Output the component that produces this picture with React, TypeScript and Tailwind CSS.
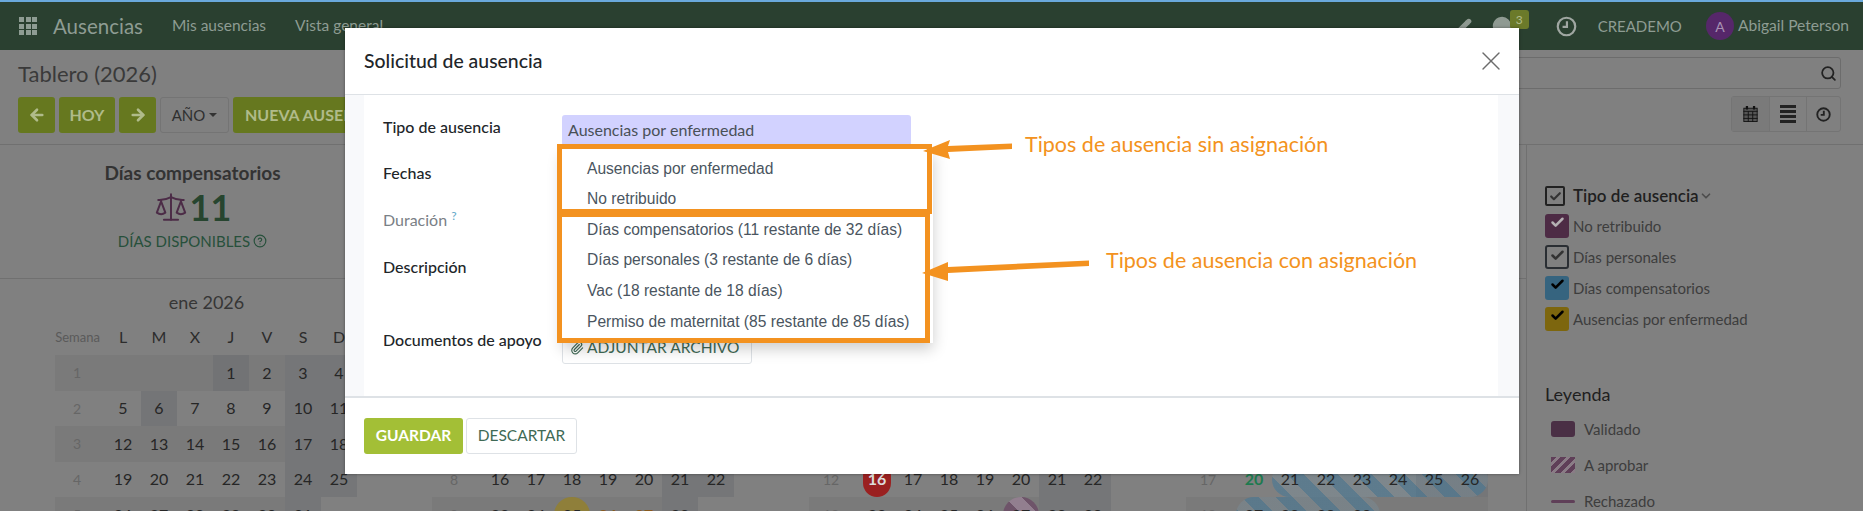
import React from 'react';
import { ArrowLeft, ArrowRight, Check, ChevronDown, CircleHelp, Paperclip, Pencil, Scale, Search, MessageCircle, X } from 'lucide-react';

const dayNames = ['L', 'M', 'X', 'J', 'V', 'S', 'D'];

// ISO week rows of a 2026 month
const buildWeeks = (month: number) => {
    const first = new Date(Date.UTC(2026, month, 1));
    const lastDay = new Date(Date.UTC(2026, month + 1, 0)).getUTCDate();
    const offset = (first.getUTCDay() + 6) % 7;
    const dayOfYear = (first.getTime() - Date.UTC(2026, 0, 1)) / 86400000;
    const firstWeek = Math.floor((dayOfYear + 3) / 7) + 1;
    const cells: (number | null)[] = [...Array(offset).fill(null), ...Array.from({ length: lastDay }, (_, i) => i + 1)];
    while (cells.length % 7) cells.push(null);
    const rows: { week: number; days: (number | null)[] }[] = [];
    for (let i = 0; i < cells.length; i += 7) {
        rows.push({ week: firstWeek + i / 7, days: cells.slice(i, i + 7) });
    }
    return rows;
};

const months = [
    { label: 'ene 2026', month: 0 },
    { label: 'feb 2026', month: 1 },
    { label: 'mar 2026', month: 2 },
    { label: 'abr 2026', month: 3 },
];

const dayClass = (month: number, day: number) => {
    if (month === 0 && day === 1) return 'bg-[#727375]';
    if (month === 0 && day === 6) return 'bg-[#747577]';
    if (month === 1 && day === 25) return 'bg-[#8f7f3a] rounded-full';
    if (month === 1 && (day === 26 || day === 27)) return 'text-[#8a5a1e]! font-bold';
    if (month === 2 && day === 16) return 'bg-[#9a2020] rounded-full mx-[4px] text-[#dcdcdc]! font-bold';
    if (month === 2 && day === 27) return 'rounded-full bg-fixed bg-[repeating-linear-gradient(45deg,#927f8f_0px,#927f8f_12px,#6e5469_12px,#6e5469_24px)]';
    if (month === 3 && day === 20) return 'text-[#1d7a4f]! font-bold';
    if (month === 3 && day >= 21) {
        const rounded = day === 21 || day === 27 ? 'rounded-l-[18px]' : day === 26 || day === 30 ? 'rounded-r-[18px]' : '';
        return `bg-fixed bg-[repeating-linear-gradient(45deg,rgba(70,120,150,0.6)_0px,rgba(70,120,150,0.6)_12px,rgba(120,155,175,0.25)_12px,rgba(120,155,175,0.25)_24px)] ${rounded}`;
    }
    return '';
};

const cellBg = (days: (number | null)[], d: number, shaded: boolean) => {
    // a Sunday left empty after a full Saturday stays unshaded
    if (d === 6 && !days[6] && days[5]) return '';
    if (d >= 5 && days[d]) return 'bg-[#757678]';
    return shaded ? 'bg-[#7a7a7a]' : '';
};

const MonthGrid: React.FC<{ label: string; month: number }> = ({ label, month }) => (
    <div className="w-[303px]">
        <div className="h-[46px] flex items-center justify-center text-[18px] text-[#363636]">{label}</div>
        <div className="flex h-[30px] items-start pt-[2px]">
            <div className="w-[50px] pr-[5px] text-[13px] leading-[20px] text-[#5a5a5a] text-center">Semana</div>
            {dayNames.map((d) => (
                <div key={d} className="w-[36px] text-center text-[16px] leading-[20px] text-[#2c2c2c]">{d}</div>
            ))}
        </div>
        {buildWeeks(month).map((row, i) => (
            <div key={row.week} className="flex h-[35.5px] items-center">
                <div className={`w-[50px] h-full pr-[6px] flex items-center justify-center text-[14px] text-[#666666] ${i % 2 === 0 ? 'bg-[#7a7a7a]' : ''}`}>{row.week}</div>
                {row.days.map((day, d) => (
                    <div key={d} className={`w-[36px] h-full ${cellBg(row.days, d, i % 2 === 0)}`}>
                        <div className={`h-full flex items-center justify-center text-[16px] text-[#262626] ${day ? dayClass(month, day) : ''}`}>{day}</div>
                    </div>
                ))}
            </div>
        ))}
    </div>
);

const ClockIcon: React.FC<{ size: number; color: string; width: number }> = ({ size, color, width }) => (
    <svg width={size} height={size} viewBox="0 0 24 24" fill="none" stroke={color} strokeWidth={width}>
        <circle cx="12" cy="12" r="10" />
        <path d="M12.5 6v6.5H7.5" />
    </svg>
);

const NavLink: React.FC<{ children: React.ReactNode }> = ({ children }) => (
    <span className="text-[15.5px] text-[#8e9c93]">{children}</span>
);

const GreenButton: React.FC<{ className: string; children: React.ReactNode }> = ({ className, children }) => (
    <div className={`h-[36px] flex items-center justify-center rounded-[3px] bg-[#66781f] text-[#b0bb8a] font-bold text-[16px] ${className}`}>{children}</div>
);

const TypeRow: React.FC<{ box: string; check: string; label: string }> = ({ box, check, label }) => (
    <div className="flex items-center h-[24px] mb-[7px]">
        <div className={`w-[24px] h-[24px] rounded-[3px] flex items-start justify-center pt-[1px] ${box}`}>
            <Check size={15} strokeWidth={4} className={check} />
        </div>
        <span className="ml-[4px] text-[15px] text-[#3d3d3d]">{label}</span>
    </div>
);

const FormLabel: React.FC<{ className: string; children: React.ReactNode }> = ({ className, children }) => (
    <div className={`absolute left-[19px] text-[16px] font-medium leading-[20px] ${className}`}>{children}</div>
);

const items = ['Ausencias por enfermedad', 'No retribuido', 'Días compensatorios (11 restante de 32 días)', 'Días personales (3 restante de 6 días)', 'Vac (18 restante de 18 días)', 'Permiso de maternitat (85 restante de 85 días)'];

export default function App() {
    return (
        <div className="relative w-[1863px] h-[511px] overflow-hidden bg-[#808080] font-['Lato','Noto_Sans',sans-serif]">
            <div className="h-[2px] bg-[#6aa9dc]" />
            {/* Navbar */}
            <div className="h-[48px] bg-[#2a4030] flex items-center">
                <div className="ml-[19px] grid grid-cols-3 gap-[1.5px] w-[18px]">
                    {Array.from({ length: 9 }).map((_, i) => (
                        <div key={i} className="h-[5px] bg-[#8e9c93]" />
                    ))}
                </div>
                <span className="ml-[16px] text-[20.5px] text-[#8e9c93]">Ausencias</span>
                <div className="ml-[29px] flex gap-[29px]">
                    <NavLink>Mis ausencias</NavLink>
                    <NavLink>Vista general</NavLink>
                </div>
                <div className="ml-auto flex items-center pr-[14px]">
                    <Pencil size={16} className="text-[#8f9a92] fill-[#8f9a92] mr-[20px]" />
                    <div className="relative mr-[44px]">
                        <MessageCircle size={20} className="text-[#8f9a92] fill-[#8f9a92]" />
                        <div className="absolute -top-[6px] left-[18px] w-[19px] h-[19px] rounded-[3px] bg-[#6b7a2a] text-[#b0bb8a] text-[12px] flex items-center justify-center">3</div>
                    </div>
                    <div className="mr-[21px]"><ClockIcon size={21} color="#a0a7a2" width={2.5} /></div>
                    <span className="text-[15px] text-[#8e9c93]">CREADEMO</span>
                    <div className="ml-[24px] w-[28px] h-[28px] rounded-full bg-[#56276a] text-[#a892b3] text-[14px] flex items-center justify-center">A</div>
                    <span className="ml-[4px] text-[15.6px] text-[#8e9c93]">Abigail Peterson</span>
                </div>
            </div>
            {/* Control panel */}
            <div className="h-[95px] border-b border-[#707070] px-[18px] pr-[22px] flex justify-between">
                <div>
                    <div className="h-[47px] flex items-center text-[22px] text-[#3a3a3a]">Tablero (2026)</div>
                    <div className="flex gap-[4px]">
                        <GreenButton className="w-[37px]"><ArrowLeft size={18} strokeWidth={3.5} /></GreenButton>
                        <GreenButton className="w-[56px]">HOY</GreenButton>
                        <GreenButton className="w-[37px]"><ArrowRight size={18} strokeWidth={3.5} /></GreenButton>
                        <div className="w-[69px] h-[36px] flex items-center justify-center gap-[4px] border border-[#747474] rounded-[3px] text-[15px] text-[#2f2f2f]">
                            AÑO
                            <span className="border-x-[4px] border-x-transparent border-t-[4px] border-t-[#333]" />
                        </div>
                        <GreenButton className="w-[160px] justify-start pl-[12px] whitespace-nowrap">NUEVA AUSENCIA</GreenButton>
                    </div>
                </div>
                <div className="flex flex-col items-end pt-[7px]">
                    <div className="w-[500px] h-[32px] border border-[#6c6c6c] rounded-[3px] flex items-center justify-end pr-[3px]">
                        <Search size={17} strokeWidth={2.5} className="text-[#222]" />
                    </div>
                    <div className="mt-[7px] flex h-[36px] w-[110px] border border-[#747474] rounded-[3px]">
                        <div className="w-[37px] flex items-center justify-center bg-[#7a7a7a]">
                            <svg width="15" height="16" viewBox="0 0 16 18" fill="none" stroke="#111" strokeWidth="1">
                                <rect x="0.5" y="2.5" width="15" height="15" fill="#555" />
                                <path d="M0 6h16M5.5 6v12M10.5 6v12M0 10h16M0 14h16" />
                                <path d="M4 0v4M12 0v4" strokeWidth="2.5" />
                            </svg>
                        </div>
                        <div className="w-[38px] flex flex-col items-center justify-center gap-[2px] border-x border-[#747474]">
                            {[0, 1, 2, 3].map((i) => <div key={i} className="w-[16px] h-[3px] bg-[#222]" />)}
                        </div>
                        <div className="flex-1 flex items-center justify-center">
                            <ClockIcon size={15} color="#222" width={3} />
                        </div>
                    </div>
                </div>
            </div>
            <div className="flex">
                {/* Main */}
                <div className="w-[1526px]">
                    <div className="h-[134px] border-b border-[#707070] flex">
                        <div className="w-[385px] pt-[17px] flex flex-col items-center">
                            <div className="text-[19px] font-bold leading-[22px] text-[#333]">Días compensatorios</div>
                            <div className="flex items-center h-[44px] mt-[1px]">
                                <Scale size={34} strokeWidth={1.4} className="text-[#4c2c47]" />
                                <span className="ml-[2px] text-[36px] font-bold text-[#27452f]">11</span>
                            </div>
                            <div className="mt-[1px] flex items-center gap-[3px] text-[15px] text-[#27503b]">
                                DÍAS DISPONIBLES <CircleHelp size={14} />
                            </div>
                        </div>
                    </div>
                    <div className="pl-[55px] flex gap-[74px]">
                        {months.map((m) => <MonthGrid key={m.month} label={m.label} month={m.month} />)}
                    </div>
                </div>
                {/* Sidebar */}
                <div className="flex-1 border-l border-[#707070] pl-[18px] pt-[39px]">
                    <div className="flex items-center h-[24px] mb-[6px]">
                        <div className="w-[20px] h-[20px] border-2 border-[#222] rounded-[2px] flex items-center justify-center">
                            <Check size={13} strokeWidth={4} className="text-[#333]" />
                        </div>
                        <span className="ml-[8px] text-[17px] font-semibold text-[#1f1f1f]">Tipo de ausencia</span>
                        <ChevronDown size={14} strokeWidth={3} className="text-[#4d4d4d]" />
                    </div>
                    <TypeRow box="bg-[#4d2b45]" check="text-[#b5b0b3]" label="No retribuido" />
                    <TypeRow box="border-2 border-[#2a2e33]" check="text-[#333]" label="Días personales" />
                    <TypeRow box="bg-[#36647f]" check="text-black" label="Días compensatorios" />
                    <TypeRow box="bg-[#7d660e]" check="text-black" label="Ausencias por enfermedad" />
                    <div className="mt-[51px] text-[18px] leading-[24px] text-[#1f1f1f]">Leyenda</div>
                    <div className="mt-[13px] flex items-center h-[20px]">
                        <div className="ml-[6px] w-[24px] h-[16px] rounded-[3px] bg-[#4a2f45]" />
                        <span className="ml-[9px] text-[15px] text-[#3d3d3d]">Validado</span>
                    </div>
                    <div className="mt-[16px] flex items-center h-[20px]">
                        <div className="ml-[6px] w-[24px] h-[16px] bg-[repeating-linear-gradient(135deg,#5f3f58_0px,#5f3f58_4px,#8a7c86_4px,#8a7c86_7px)]" />
                        <span className="ml-[9px] text-[15px] text-[#3d3d3d]">A aprobar</span>
                    </div>
                    <div className="mt-[16px] flex items-center h-[20px]">
                        <div className="ml-[6px] w-[24px] h-[3px] rounded-full bg-[#5f3f58]" />
                        <span className="ml-[9px] text-[15px] text-[#3d3d3d]">Rechazado</span>
                    </div>
                </div>
            </div>

            {/* Modal */}
            <div className="absolute left-[345px] top-[28px] w-[1174px] h-[446px] bg-white shadow-[0_0_3px_rgba(0,0,0,0.4)] flex flex-col">
                <div className="h-[67px] shrink-0 border-b border-[#dee2e6] flex items-center justify-between pl-[19px] pr-[12px]">
                    <span className="text-[19.4px] font-medium text-[#212529]">Solicitud de ausencia</span>
                    <X size={32} strokeWidth={1} className="text-[#6c6c6c]" />
                </div>
                <div className="h-[303px] shrink-0 bg-[#f8f9fb] px-[19px] pr-[21px] border-b-2 border-[#dee2e6]">
                    <div className="relative h-full bg-white">
                        <FormLabel className="top-[22px] text-[#212529]">Tipo de ausencia</FormLabel>
                        <FormLabel className="top-[68px] text-[#212529]">Fechas</FormLabel>
                        <FormLabel className="top-[115px] text-[#7a8086] font-normal">Duración <sup className="text-[#5fa8c8]">?</sup></FormLabel>
                        <FormLabel className="top-[162px] text-[#212529]">Descripción</FormLabel>
                        <FormLabel className="top-[235px] text-[#212529]">Documentos de apoyo</FormLabel>

                        <div className="absolute left-[198px] top-[20px] w-[349px] h-[30px] bg-[#d2d2ff] rounded-[3px] border-b border-[#c3c3ee] pl-[6px] flex items-center text-[16px] text-[#495057]">Ausencias por enfermedad</div>
                        <div className="absolute left-[198px] top-[238px] w-[190px] h-[31px] border border-[#dee2e6] rounded-[3px] flex items-center pl-[7px] pb-[2px] gap-[3px] text-[15.5px] text-[#3f6a55]">
                            <Paperclip size={14} /> ADJUNTAR ARCHIVO
                        </div>

                        {/* Dropdown */}
                        <div className="absolute left-[198px] top-[54px] w-[371px] h-[194px] bg-white shadow-[0_6px_14px_rgba(0,0,0,0.2)] pt-[4px] font-['Liberation_Sans',sans-serif]">
                            {items.map((item) => (
                                <div key={item} className="h-[30.6px] flex items-center pl-[25px] text-[15.6px] text-[#4a5560] whitespace-nowrap">{item}</div>
                            ))}
                        </div>
                    </div>
                </div>
                <div className="pt-[20px] pl-[19px] flex gap-[3px]">
                    <div className="w-[99px] h-[36px] rounded-[3px] bg-[#a3bf36] text-white font-bold text-[15.5px] flex items-center justify-center">GUARDAR</div>
                    <div className="w-[111px] h-[36px] rounded-[3px] border border-[#dee2e6] text-[#3f6a55] text-[15.5px] flex items-center justify-center">DESCARTAR</div>
                </div>
            </div>

            {/* Screenshot annotations */}
            <div className="absolute left-[557px] top-[144px] w-[375px] h-[70px] border-[5px] border-[#f39220]" />
            <div className="absolute left-[557px] top-[212px] w-[373px] h-[131px] border-[5px] border-[#f39220]" />
            <svg className="absolute left-0 top-0" width="1863" height="511" fill="#f39220" stroke="none">
                <path d="M1012 143.5 L948 146 L950 140 L923 151 L950 159 L948 152 L1012 149 Z" />
                <path d="M1089 260.5 L948 267 L948 262 L922 273 L948 281 L948 273 L1089 266 Z" />
            </svg>
            <div className="absolute left-[1025px] top-[130px] text-[21.5px] leading-[28px] text-[#f39220] whitespace-nowrap">Tipos de ausencia sin asignación</div>
            <div className="absolute left-[1106px] top-[246px] text-[21.5px] leading-[28px] text-[#f39220] whitespace-nowrap">Tipos de ausencia con asignación</div>
        </div>
    );
}
